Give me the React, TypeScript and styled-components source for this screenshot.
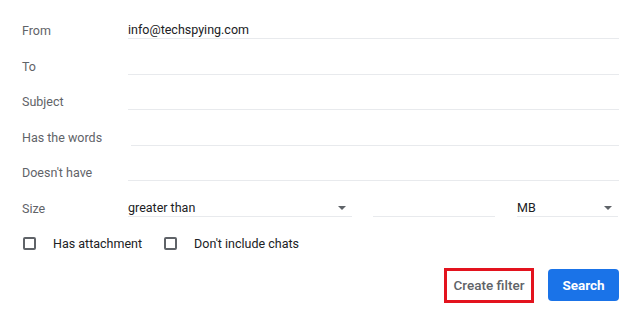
import { createGlobalStyle, styled } from "styled-components";

const GlobalStyle = createGlobalStyle`
  html, body {
    margin: 0;
    padding: 0;
    background: #ffffff;
  }
  body {
    font-family: Roboto, "Liberation Sans", Arial, sans-serif;
    -webkit-font-smoothing: antialiased;
  }
`;

const Panel = styled.div`
  width: 640px;
  height: 320px;
  box-sizing: border-box;
  padding: 3.5px 21px 0 22px;
  display: flex;
  flex-direction: column;
`;

const Row = styled.div`
  display: flex;
  align-items: flex-end;
  height: 35.5px;
`;

const Label = styled.div`
  flex: 0 0 auto;
  box-sizing: border-box;
  min-width: 106px;
  padding-right: 29px;
  padding-bottom: 0;
  font-size: 12.5px;
  line-height: 16px;
  color: #5f6368;
  white-space: nowrap;
`;

const Field = styled.div<{ $width?: number }>`
  ${(p) => (p.$width ? `flex: 0 0 ${p.$width}px;` : "flex: 1 1 auto;")}
  box-sizing: border-box;
  min-height: 17px;
  display: flex;
  align-items: center;
  justify-content: space-between;
  border-bottom: 1px solid #e8eaed;
  font-size: 12.5px;
  line-height: 16px;
  color: #202124;
  padding: 0 6px 0 0;
`;

const Gap = styled.div<{ $w: number }>`
  flex: 0 0 ${(p) => p.$w}px;
`;

const Caret = styled.span`
  width: 0;
  height: 0;
  border-left: 4px solid transparent;
  border-right: 4px solid transparent;
  border-top: 4px solid #5f6368;
`;

const CheckRow = styled.div`
  display: flex;
  align-items: center;
  height: 20px;
  margin-top: 17px;
  padding-left: 1px;
`;

const Check = styled.label`
  display: flex;
  align-items: center;
  gap: 17px;
  margin-right: 22px;
  font-size: 12.5px;
  color: #202124;
`;

const Box = styled.span`
  width: 13px;
  height: 13px;
  box-sizing: border-box;
  border: 2px solid #5f6368;
  border-radius: 2px;
`;

const Actions = styled.div`
  display: flex;
  justify-content: flex-end;
  align-items: center;
  gap: 14px;
  margin-top: 14px;
`;

const CreateButton = styled.button`
  box-sizing: border-box;
  width: 90px;
  height: 35px;
  border: 3px solid #e3131e;
  background: #ffffff;
  color: #5f6368;
  font-family: inherit;
  font-size: 13.5px;
  font-weight: 500;
  padding: 0;
`;

const SearchButton = styled.button`
  box-sizing: border-box;
  width: 71px;
  height: 32px;
  border: none;
  border-radius: 4px;
  background: #1a73e8;
  color: #ffffff;
  font-family: inherit;
  font-size: 13.5px;
  font-weight: 700;
  padding: 0;
`;

const fields = [
  { label: "From", value: "info@techspying.com" },
  { label: "To", value: "" },
  { label: "Subject", value: "" },
  { label: "Has the words", value: "" },
  { label: "Doesn't have", value: "" },
];

export default function App() {
  return (
    <>
      <GlobalStyle />
      <Panel>
        {fields.map((f) => (
          <Row key={f.label}>
            <Label>{f.label}</Label>
            <Field>{f.value}</Field>
          </Row>
        ))}
        <Row>
          <Label>Size</Label>
          <Field $width={224}>
            greater than
            <Caret />
          </Field>
          <Gap $w={21} />
          <Field $width={122} />
          <Gap $w={22} />
          <Field $width={101}>
            MB
            <Caret />
          </Field>
        </Row>
        <CheckRow>
          <Check>
            <Box />
            Has attachment
          </Check>
          <Check>
            <Box />
            Don't include chats
          </Check>
        </CheckRow>
        <Actions>
          <CreateButton>Create filter</CreateButton>
          <SearchButton>Search</SearchButton>
        </Actions>
      </Panel>
    </>
  );
}
